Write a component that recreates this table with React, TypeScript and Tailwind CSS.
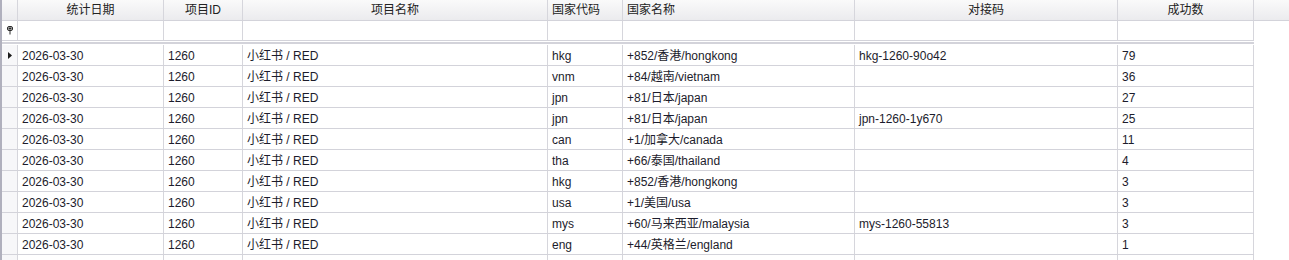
import React from 'react';

type Row = {
  date: string;
  pid: string;
  name: string;
  code: string;
  country: string;
  dock: string;
  count: string;
};

const rows: Row[] = [
  { date: '2026-03-30', pid: '1260', name: '小红书 / RED', code: 'hkg', country: '+852/香港/hongkong', dock: 'hkg-1260-90o42', count: '79' },
  { date: '2026-03-30', pid: '1260', name: '小红书 / RED', code: 'vnm', country: '+84/越南/vietnam', dock: '', count: '36' },
  { date: '2026-03-30', pid: '1260', name: '小红书 / RED', code: 'jpn', country: '+81/日本/japan', dock: '', count: '27' },
  { date: '2026-03-30', pid: '1260', name: '小红书 / RED', code: 'jpn', country: '+81/日本/japan', dock: 'jpn-1260-1y670', count: '25' },
  { date: '2026-03-30', pid: '1260', name: '小红书 / RED', code: 'can', country: '+1/加拿大/canada', dock: '', count: '11' },
  { date: '2026-03-30', pid: '1260', name: '小红书 / RED', code: 'tha', country: '+66/泰国/thailand', dock: '', count: '4' },
  { date: '2026-03-30', pid: '1260', name: '小红书 / RED', code: 'hkg', country: '+852/香港/hongkong', dock: '', count: '3' },
  { date: '2026-03-30', pid: '1260', name: '小红书 / RED', code: 'usa', country: '+1/美国/usa', dock: '', count: '3' },
  { date: '2026-03-30', pid: '1260', name: '小红书 / RED', code: 'mys', country: '+60/马来西亚/malaysia', dock: 'mys-1260-55813', count: '3' },
  { date: '2026-03-30', pid: '1260', name: '小红书 / RED', code: 'eng', country: '+44/英格兰/england', dock: '', count: '1' },
];

// widths include the 1px right border
const cols = [
  { key: 'date', title: '统计日期', w: 'w-[146px]', center: true },
  { key: 'pid', title: '项目ID', w: 'w-[79px]', center: true },
  { key: 'name', title: '项目名称', w: 'w-[305px]', center: true },
  { key: 'code', title: '国家代码', w: 'w-[75px]', center: false },
  { key: 'country', title: '国家名称', w: 'w-[232px]', center: false },
  { key: 'dock', title: '对接码', w: 'w-[263px]', center: true },
  { key: 'count', title: '成功数', w: 'w-[136px]', center: true },
] as const;

function PinIcon() {
  return (
    <svg width="6" height="9" viewBox="0 0 6 9">
      <rect x="0.5" y="0.5" width="5" height="4" rx="1.5" fill="#f2f2f2" stroke="#2a2a2a" />
      <rect x="1.5" y="1.5" width="3" height="2" fill="#2a2a2a" />
      <rect x="2.5" y="4.5" width="1" height="4" fill="#2a2a2a" />
    </svg>
  );
}

function RowArrow() {
  return (
    <svg width="4" height="7" viewBox="0 0 4 7">
      <polygon points="0,0 4,3.5 0,7" fill="#1a1a1a" />
    </svg>
  );
}

export default function App() {
  return (
    <div className="h-[260px] w-[1289px] overflow-hidden bg-white font-['Liberation_Sans','Noto_Sans_CJK_SC',sans-serif] text-[12px] text-[#1c1c2c]">
      <div className="flex h-full flex-col border-l-2 border-[#b0b0bd]">
        {/* header */}
        <div className="flex h-[21px] shrink-0 border-b border-[#d3d3da] bg-gradient-to-b from-[#fafafa] to-[#ebebee] text-[#222]">
          <div className="w-[16px] shrink-0 border-r border-[#d6d6dc]" />
          {cols.map((c) => (
            <div
              key={c.key}
              className={`${c.w} flex shrink-0 items-center border-r border-[#d6d6dc] px-[4px] ${c.center ? 'justify-center' : 'justify-start'}`}
            >
              {c.title}
            </div>
          ))}
          <div className="flex-1" />
        </div>

        {/* filter row */}
        <div className="flex h-[20px] w-[1252px] shrink-0 border-b border-[#d3d3da]">
          <div className="flex w-[16px] shrink-0 items-center justify-center border-r border-[#d6d6dc] pl-[1px]">
            <PinIcon />
          </div>
          {cols.map((c) => (
            <div key={c.key} className={`${c.w} shrink-0 border-r border-[#d6d6dc]`} />
          ))}
        </div>

        {/* separator */}
        <div className="mt-[1px] h-[3px] w-[1252px] shrink-0 border-b border-white bg-[#d3d3da]" />

        {/* data rows */}
        {rows.map((r, i) => (
          <div key={i} className="flex h-[21px] w-[1252px] shrink-0 border-b border-[#d3d3da]">
            <div className="flex w-[16px] shrink-0 items-center justify-center border-r border-[#d6d6dc] bg-[#f7f7f9]">
              {i === 0 && <RowArrow />}
            </div>
            {cols.map((c) => (
              <div
                key={c.key}
                className={`${c.w} flex shrink-0 items-center overflow-hidden whitespace-nowrap border-r border-[#d6d6dc] px-[4px] pt-px`}
              >
                {r[c.key]}
              </div>
            ))}
          </div>
        ))}
        <div className="flex h-[21px] w-[1252px] shrink-0">
          <div className="w-[16px] shrink-0 border-r border-[#d6d6dc] bg-[#f7f7f9]" />
          {cols.map((c) => (
            <div key={c.key} className={`${c.w} shrink-0 border-r border-[#d6d6dc]`} />
          ))}
        </div>
      </div>
    </div>
  );
}
